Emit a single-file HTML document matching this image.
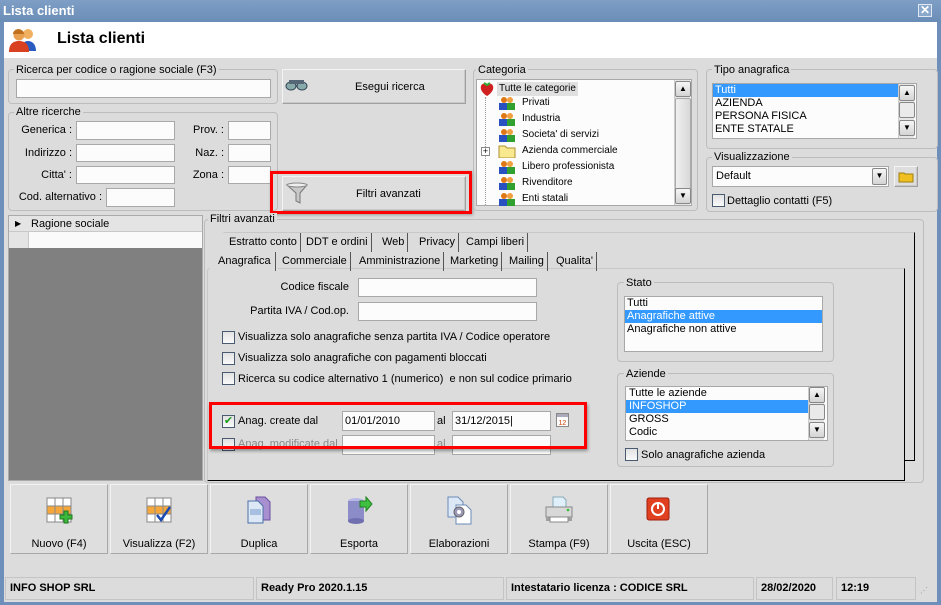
<!DOCTYPE html>
<html><head><meta charset="utf-8"><style>
*{box-sizing:border-box;margin:0;padding:0}
body{width:941px;height:605px;overflow:hidden;background:#dcdcdc;font-family:"Liberation Sans",sans-serif;font-size:11px;color:#000;position:relative}
.a{position:absolute}
.g{position:absolute;border:1px solid #bdbdbd;border-radius:4px}
.gl{position:absolute;background:#dcdcdc;padding:0 2px;font-size:11px;line-height:12px}
.in{position:absolute;background:#fcfcfc;border:1px solid #a8a8a8}
.btn{position:absolute;background:#dedede;border:1px solid #a0a0a0;border-top-color:#f4f4f4;border-left-color:#f4f4f4;box-shadow:inset -1px -1px 0 #c8c8c8}
.lbl{position:absolute;text-align:right;font-size:11px;line-height:13px}
.cb{position:absolute;width:13px;height:13px;border:1px solid #4a5a70;background:linear-gradient(#e2e2e2,#fafafa)}
.tab{position:absolute;height:19px;border-right:1px solid #555;font-size:11px;line-height:19px;padding:0 3px;white-space:nowrap}
.sb{position:absolute;width:16px;background:#e6e6e6;border-left:1px solid #ccc}
.sbb{position:absolute;left:0;width:16px;height:16px;background:linear-gradient(#f6f6f6,#d4d4d4);border:1px solid #888;border-radius:2px;font-size:8px;text-align:center;line-height:14px}
.st{position:absolute;top:577px;height:23px;border:1px solid #c4c4c4;font-weight:bold;font-size:11px;line-height:21px;padding-left:4px}
.bb{position:absolute;top:484px;width:98px;height:70px;background:#dedede;border:1px solid #a8a8a8;border-top-color:#f2f2f2;border-left-color:#f2f2f2}
.bb span{position:absolute;left:0;right:0;top:53px;text-align:center;font-size:11px}
.bb svg{position:absolute;left:33px;top:10px}
.tr{position:absolute;left:46px;font-size:10px;line-height:14px;white-space:nowrap}
.ti{position:absolute;left:22px;width:18px;height:14px}
</style></head><body>
<!-- frame -->
<div class="a" style="left:0;top:0;width:941px;height:22px;background:linear-gradient(#7e9ec5,#6a8db7);"></div>
<div class="a" style="left:3px;top:3px;color:#fff;font-weight:bold;font-size:13px;line-height:16px">Lista clienti</div>
<div class="a" style="left:918px;top:4px;width:14px;height:13px;border:1px solid #dfe8f3;background:#8aa8cc;color:#fff;font-weight:bold;font-size:12px;line-height:11px;text-align:center">✕</div>
<div class="a" style="left:0;top:22px;width:4px;height:583px;background:#6d8fb9"></div>
<div class="a" style="left:937px;top:22px;width:4px;height:583px;background:#6d8fb9"></div>
<div class="a" style="left:0;top:602px;width:941px;height:3px;background:#6d8fb9"></div>
<div class="a" style="left:4px;top:22px;width:933px;height:36px;background:#fff"></div>
<svg class="a" style="left:8px;top:25px" width="30" height="28" viewBox="0 0 30 28"><circle cx="20" cy="9" r="5" fill="#f0b060"/><path d="M12 26c0-7 4-10 8-10s8 3 8 10z" fill="#2a5bc0"/><circle cx="11" cy="10" r="5.5" fill="#e8a050"/><path d="M10 4a6 5 0 0 1 6 5h-11a6 5 0 0 1 5-5z" fill="#c0701c"/><path d="M1 27c0-8 4-11 10-11s10 3 10 11z" fill="#d84020"/></svg>
<div class="a" style="left:57px;top:29px;font-weight:bold;font-size:16px;line-height:20px">Lista clienti</div>

<!-- ricerca -->
<div class="g" style="left:8px;top:69px;width:270px;height:35px"></div>
<div class="gl" style="left:14px;top:64px">Ricerca per codice o ragione sociale (F3)</div>
<div class="in" style="left:16px;top:79px;width:255px;height:19px"></div>
<div class="btn" style="left:282px;top:69px;width:184px;height:35px"></div>
<svg class="a" style="left:285px;top:78px" width="24" height="14" viewBox="0 0 24 14"><ellipse cx="6" cy="8" rx="5" ry="4" fill="#8aa" stroke="#345"/><ellipse cx="17" cy="8" rx="5" ry="4" fill="#8aa" stroke="#345"/><rect x="4" y="2" width="15" height="4" fill="#567"/></svg>
<div class="a" style="left:355px;top:81px;font-size:11px">Esegui ricerca</div>

<div class="g" style="left:8px;top:112px;width:270px;height:99px"></div>
<div class="gl" style="left:14px;top:106px">Altre ricerche</div>
<div class="lbl" style="left:10px;top:124px;width:62px">Generica :</div>
<div class="in" style="left:76px;top:121px;width:99px;height:19px"></div>
<div class="lbl" style="left:10px;top:147px;width:62px">Indirizzo :</div>
<div class="in" style="left:76px;top:144px;width:99px;height:18px"></div>
<div class="lbl" style="left:10px;top:169px;width:62px">Citta' :</div>
<div class="in" style="left:76px;top:166px;width:99px;height:18px"></div>
<div class="lbl" style="left:10px;top:191px;width:92px">Cod. alternativo :</div>
<div class="in" style="left:106px;top:188px;width:69px;height:19px"></div>
<div class="lbl" style="left:180px;top:124px;width:44px">Prov. :</div>
<div class="in" style="left:228px;top:121px;width:43px;height:19px"></div>
<div class="lbl" style="left:180px;top:147px;width:44px">Naz. :</div>
<div class="in" style="left:228px;top:144px;width:43px;height:18px"></div>
<div class="lbl" style="left:180px;top:169px;width:44px">Zona :</div>
<div class="in" style="left:228px;top:166px;width:43px;height:18px"></div>

<div class="btn" style="left:282px;top:176px;width:184px;height:35px"></div>
<svg class="a" style="left:285px;top:181px" width="24" height="24" viewBox="0 0 24 24"><path d="M2 4h20l-7 8v10l-4-2v-8z" fill="#c8c8c8" stroke="#777"/><ellipse cx="12" cy="4" rx="10" ry="2" fill="#eee" stroke="#888"/></svg>
<div class="a" style="left:356px;top:188px">Filtri avanzati</div>
<div class="a" style="left:270px;top:171px;width:202px;height:43px;border:3px solid #f00;box-shadow:1px 1px 3px rgba(0,0,0,.3)"></div>

<!-- categoria -->
<div class="g" style="left:473px;top:69px;width:225px;height:142px"></div>
<div class="gl" style="left:476px;top:64px">Categoria</div>
<div class="in" style="left:476px;top:79px;width:216px;height:127px;overflow:hidden">
 <svg class="a" style="left:2px;top:1px" width="16" height="16" viewBox="0 0 16 16"><path d="M8 15C3 12 1 8 2 5s5-3 6-2c1-1 5-1 6 2s-1 7-6 10z" fill="#d02020"/><path d="M5 2l3 2 3-2" stroke="#3a3" stroke-width="2" fill="none"/></svg>
 <div class="a" style="left:20px;top:2px;background:#e0e0e0;font-size:10px;line-height:14px;padding:0 2px">Tutte le categorie</div>
 <div class="a" style="left:8px;top:17px;height:108px;border-left:1px dotted #999"></div>
</div>
<div class="a" style="left:476px;top:79px;width:200px;height:127px;overflow:hidden">
<svg class="ti" style="top:17px" viewBox="0 0 18 14"><circle cx="6" cy="4" r="3" fill="#e07818"/><circle cx="12" cy="4" r="3" fill="#f0a040"/><rect x="1" y="7" width="8" height="7" fill="#2850c0"/><rect x="9" y="7" width="8" height="7" fill="#30a030"/></svg><div class="tr" style="top:17px">Privati</div>
<svg class="ti" style="top:33px" viewBox="0 0 18 14"><circle cx="6" cy="4" r="3" fill="#e07818"/><circle cx="12" cy="4" r="3" fill="#f0a040"/><rect x="1" y="7" width="8" height="7" fill="#2850c0"/><rect x="9" y="7" width="8" height="7" fill="#30a030"/></svg><div class="tr" style="top:33px">Industria</div>
<svg class="ti" style="top:49px" viewBox="0 0 18 14"><circle cx="6" cy="4" r="3" fill="#e07818"/><circle cx="12" cy="4" r="3" fill="#f0a040"/><rect x="1" y="7" width="8" height="7" fill="#2850c0"/><rect x="9" y="7" width="8" height="7" fill="#30a030"/></svg><div class="tr" style="top:49px">Societa' di servizi</div>
<div class="a" style="left:5px;top:68px;width:9px;height:9px;border:1px solid #888;background:#fff;font-size:9px;line-height:7px;text-align:center">+</div>
<svg class="ti" style="top:65px" viewBox="0 0 18 14"><path d="M1 2h6l2 2h8v10H1z" fill="#f8e890" stroke="#b09030"/></svg><div class="tr" style="top:65px">Azienda commerciale</div>
<svg class="ti" style="top:81px" viewBox="0 0 18 14"><circle cx="6" cy="4" r="3" fill="#e07818"/><circle cx="12" cy="4" r="3" fill="#f0a040"/><rect x="1" y="7" width="8" height="7" fill="#2850c0"/><rect x="9" y="7" width="8" height="7" fill="#30a030"/></svg><div class="tr" style="top:81px">Libero professionista</div>
<svg class="ti" style="top:97px" viewBox="0 0 18 14"><circle cx="6" cy="4" r="3" fill="#e07818"/><circle cx="12" cy="4" r="3" fill="#f0a040"/><rect x="1" y="7" width="8" height="7" fill="#2850c0"/><rect x="9" y="7" width="8" height="7" fill="#30a030"/></svg><div class="tr" style="top:97px">Rivenditore</div>
<svg class="ti" style="top:113px" viewBox="0 0 18 14"><circle cx="6" cy="4" r="3" fill="#e07818"/><circle cx="12" cy="4" r="3" fill="#f0a040"/><rect x="1" y="7" width="8" height="7" fill="#2850c0"/><rect x="9" y="7" width="8" height="7" fill="#30a030"/></svg><div class="tr" style="top:113px">Enti statali</div>
</div>
<div class="sb" style="left:674px;top:80px;height:125px"><div class="sbb" style="top:1px">▲</div><div class="a" style="left:0;top:18px;width:16px;height:97px;background:linear-gradient(90deg,#f0f0f0,#d8d8d8);border:1px solid #aaa;border-radius:2px"></div><div class="sbb" style="top:108px">▼</div></div>

<!-- tipo anagrafica -->
<div class="g" style="left:706px;top:69px;width:232px;height:80px"></div>
<div class="gl" style="left:712px;top:64px">Tipo anagrafica</div>
<div class="in" style="left:712px;top:83px;width:205px;height:56px;font-size:11px;line-height:13px">
 <div style="background:#3399ff;color:#fff;padding-left:2px;width:185px">Tutti</div>
 <div style="padding-left:2px">AZIENDA</div><div style="padding-left:2px">PERSONA FISICA</div><div style="padding-left:2px">ENTE STATALE</div>
</div>
<div class="sb" style="left:898px;top:84px;height:54px"><div class="sbb" style="top:1px">▲</div><div class="sbb" style="top:18px;background:#eaeaea"></div><div class="sbb" style="top:36px">▼</div></div>

<div class="g" style="left:706px;top:157px;width:232px;height:55px"></div>
<div class="gl" style="left:712px;top:151px">Visualizzazione</div>
<div class="in" style="left:712px;top:166px;width:177px;height:21px;padding:3px 3px;font-size:11px">Default</div>
<div class="sbb" style="left:872px;top:168px;width:15px;height:17px">▼</div>
<div class="btn" style="left:894px;top:166px;width:24px;height:21px"></div>
<svg class="a" style="left:898px;top:170px" width="16" height="13" viewBox="0 0 16 13"><path d="M1 3h5l1 1h8v8H1z" fill="#f0c020" stroke="#a08010"/></svg>
<div class="cb" style="left:712px;top:194px"></div>
<div class="a" style="left:727px;top:195px">Dettaglio contatti (F5)</div>

<!-- grid -->
<div class="a" style="left:8px;top:215px;width:195px;height:266px;background:#808080;border:1px solid #aaa"></div>
<div class="a" style="left:9px;top:216px;width:193px;height:16px;background:#e4e4e4;border-bottom:1px solid #c8c8c8"></div>
<div class="a" style="left:15px;top:219px;font-size:8px">▶</div>
<div class="a" style="left:31px;top:218px">Ragione sociale</div>
<div class="a" style="left:9px;top:232px;width:20px;height:16px;background:#e4e4e4;border-right:1px solid #c8c8c8"></div>
<div class="a" style="left:29px;top:232px;width:173px;height:16px;background:#fafafa"></div>

<!-- filtri avanzati -->
<div class="g" style="left:204px;top:219px;width:720px;height:264px"></div>
<div class="gl" style="left:208px;top:213px">Filtri avanzati</div>
<div class="a" style="left:222px;top:232px;width:693px;height:229px;border-right:1px solid #000;border-bottom:1px solid #000;border-top:1px solid #c8c8c8;border-radius:3px 0 0 0"></div>
<div class="tab" style="left:226px;top:233px">Estratto conto</div>
<div class="tab" style="left:303px;top:233px">DDT e ordini</div>
<div class="tab" style="left:379px;top:233px">Web</div>
<div class="tab" style="left:416px;top:233px">Privacy</div>
<div class="tab" style="left:463px;top:233px">Campi liberi</div>
<div class="a" style="left:207px;top:268px;width:698px;height:213px;border-right:1px solid #000;border-bottom:1px solid #000;border-top:1px solid #c8c8c8;border-left:1px solid #c8c8c8;border-radius:3px 0 0 0;background:#dcdcdc"></div>
<div class="a" style="left:210px;top:251px;width:68px;height:19px;background:#dcdcdc"></div>
<div class="tab" style="left:214px;top:252px;padding:0 4px">Anagrafica</div>
<div class="tab" style="left:279px;top:252px">Commerciale</div>
<div class="tab" style="left:356px;top:252px">Amministrazione</div>
<div class="tab" style="left:447px;top:252px">Marketing</div>
<div class="tab" style="left:506px;top:252px">Mailing</div>
<div class="tab" style="left:553px;top:252px">Qualita'</div>

<div class="lbl" style="left:240px;top:281px;width:109px">Codice fiscale</div>
<div class="in" style="left:358px;top:278px;width:179px;height:19px"></div>
<div class="lbl" style="left:230px;top:305px;width:119px">Partita IVA / Cod.op.</div>
<div class="in" style="left:358px;top:302px;width:179px;height:19px"></div>
<div class="cb" style="left:222px;top:331px"></div><div class="a" style="left:238px;top:331px">Visualizza solo anagrafiche senza partita IVA / Codice operatore</div>
<div class="cb" style="left:222px;top:352px"></div><div class="a" style="left:238px;top:352px">Visualizza solo anagrafiche con pagamenti bloccati</div>
<div class="cb" style="left:222px;top:372px"></div><div class="a" style="left:238px;top:373px">Ricerca su codice alternativo 1 (numerico)&nbsp; e non sul codice primario</div>
<div class="cb" style="left:222px;top:415px;color:#1a9a1a;font-size:11px;line-height:11px;text-align:center">✔</div><div class="a" style="left:238px;top:415px">Anag. create dal</div>
<div class="in" style="left:342px;top:411px;width:93px;height:20px;padding:3px 2px">01/01/2010</div>
<div class="a" style="left:437px;top:415px">al</div>
<div class="in" style="left:452px;top:411px;width:99px;height:20px;padding:3px 2px">31/12/2015|</div>
<svg class="a" style="left:556px;top:413px" width="13" height="14" viewBox="0 0 13 14"><rect x=".5" y=".5" width="12" height="13" fill="#fff" stroke="#888"/><rect x="1" y="1" width="11" height="3" fill="#aab"/><text x="2.5" y="12" font-size="7" fill="#d04000" font-family="Liberation Sans">12</text></svg>
<div class="cb" style="left:222px;top:438px"></div><div class="a" style="left:238px;top:438px;color:#888">Anag. modificate dal</div>
<div class="in" style="left:342px;top:435px;width:93px;height:20px"></div>
<div class="a" style="left:437px;top:438px;color:#888">al</div>
<div class="in" style="left:452px;top:435px;width:99px;height:20px"></div>
<div class="a" style="left:209px;top:402px;width:378px;height:47px;border:3px solid #f00;box-shadow:1px 2px 3px rgba(0,0,0,.35)"></div>

<div class="g" style="left:617px;top:282px;width:217px;height:80px"></div>
<div class="gl" style="left:624px;top:277px">Stato</div>
<div class="in" style="left:624px;top:296px;width:199px;height:56px;line-height:13px">
 <div style="padding-left:2px">Tutti</div><div style="background:#3399ff;color:#fff;padding-left:2px">Anagrafiche attive</div><div style="padding-left:2px">Anagrafiche non attive</div>
</div>
<div class="g" style="left:617px;top:373px;width:217px;height:94px"></div>
<div class="gl" style="left:624px;top:368px">Aziende</div>
<div class="in" style="left:625px;top:386px;width:203px;height:55px;line-height:13px;overflow:hidden">
 <div style="padding-left:3px">Tutte le aziende</div><div style="background:#3399ff;color:#fff;padding-left:3px;width:183px">INFOSHOP</div><div style="padding-left:3px">GROSS</div><div style="padding-left:3px">Codic</div>
</div>
<div class="sb" style="left:808px;top:387px;height:53px"><div class="sbb" style="top:0">▲</div><div class="sbb" style="top:17px;background:#eaeaea"></div><div class="sbb" style="top:35px">▼</div></div>
<div class="cb" style="left:625px;top:448px"></div><div class="a" style="left:641px;top:449px">Solo anagrafiche azienda</div>

<!-- bottom buttons -->
<div class="bb" style="left:10px"><svg width="30" height="30" viewBox="0 0 30 30"><g stroke="#888" stroke-width="1"><rect x="3" y="3" width="24" height="24" fill="#fff"/><rect x="3" y="11" width="24" height="8" fill="#f6a73c"/><path d="M11 3v24M19 3v24M3 11h24M3 19h24"/></g><path d="M20 16h4v4h4v4h-4v4h-4v-4h-4v-4h4z" fill="#3cb83c" stroke="#1a7a1a"/></svg><span>Nuovo (F4)</span></div>
<div class="bb" style="left:110px"><svg width="30" height="30" viewBox="0 0 30 30"><g stroke="#888"><rect x="3" y="3" width="24" height="24" fill="#fff"/><rect x="3" y="11" width="24" height="8" fill="#f6a73c"/><path d="M11 3v24M19 3v24M3 11h24M3 19h24"/></g><path d="M13 20l4 5 9-13" stroke="#1a4ab0" stroke-width="2.5" fill="none"/></svg><span>Visualizza (F2)</span></div>
<div class="bb" style="left:210px"><svg width="30" height="30" viewBox="0 0 30 30"><path d="M12 2h9l5 5v18H12z" fill="#a890d0" stroke="#6a50a0"/><path d="M4 6h10l5 5v17H4z" fill="#dde8f6" stroke="#4a70a8"/><rect x="6" y="14" width="11" height="6" fill="#a8c0e0"/></svg><span>Duplica</span></div>
<div class="bb" style="left:310px"><svg width="30" height="30" viewBox="0 0 30 30"><ellipse cx="12" cy="6" rx="8" ry="3" fill="#b8b8e8"/><rect x="4" y="6" width="16" height="20" fill="#8c8cc8"/><ellipse cx="12" cy="26" rx="8" ry="3" fill="#7070b0"/><path d="M16 6h6V2l6 7-6 7v-4h-6z" fill="#40c040" stroke="#208020"/></svg><span>Esporta</span></div>
<div class="bb" style="left:410px"><svg width="30" height="30" viewBox="0 0 30 30"><path d="M4 2h10l5 5v15H4z" fill="#dde8f6" stroke="#6a8ab8"/><path d="M12 10h10l5 5v14H12z" fill="#fff" stroke="#6a8ab8"/><circle cx="15" cy="17" r="5" fill="#9a9ab8" stroke="#666"/><circle cx="15" cy="17" r="2" fill="#fff"/></svg><span>Elaborazioni</span></div>
<div class="bb" style="left:510px"><svg width="30" height="30" viewBox="0 0 30 30"><path d="M9 2h10l3 3v8H9z" fill="#e0f0fa" stroke="#8ab"/><path d="M2 12h26v10H2z" fill="#d8d8d8" stroke="#888"/><path d="M2 22h26v4H2z" fill="#a0a0a0"/><rect x="6" y="22" width="18" height="5" fill="#fff" stroke="#888"/><circle cx="24" cy="15" r="1.3" fill="#30c030"/></svg><span>Stampa (F9)</span></div>
<div class="bb" style="left:610px"><svg width="30" height="30" viewBox="0 0 30 30"><rect x="3" y="3" width="22" height="22" rx="2" fill="#e04020" stroke="#a02010"/><circle cx="14" cy="14" r="6" fill="none" stroke="#fff" stroke-width="2"/><path d="M14 8v6" stroke="#fff" stroke-width="2"/></svg><span>Uscita (ESC)</span></div>

<!-- status -->
<div class="st" style="left:5px;width:249px">INFO SHOP SRL</div>
<div class="st" style="left:256px;width:248px">Ready Pro 2020.1.15</div>
<div class="st" style="left:506px;width:248px">Intestatario licenza : CODICE SRL</div>
<div class="st" style="left:756px;width:77px">28/02/2020</div>
<div class="st" style="left:836px;width:80px">12:19</div>
<div class="a" style="left:920px;top:586px;color:#999;font-size:8px">⋰</div>
</body></html>
